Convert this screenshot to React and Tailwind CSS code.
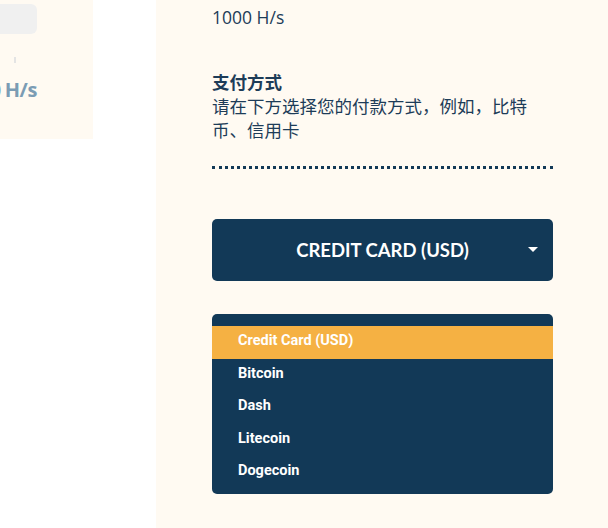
import React from "react";

export default function App() {
  const items = ["Credit Card (USD)", "Bitcoin", "Dash", "Litecoin", "Dogecoin"];
  return (
    <div className="flex w-[608px] h-[528px] bg-white overflow-hidden">
      <div className="w-[93px] h-[139px] shrink-0 bg-[#fffaf2] overflow-hidden flex flex-col items-end pr-[56px]">
        <div className="mt-[4px] w-[60px] h-[30px] shrink-0 rounded-[6px] bg-[#f0f0f0]" />
        <div className="mt-[23px] mr-[21px] w-[2px] h-[6px] shrink-0 bg-[#e4e4e4]" />
        <div className="mt-[13px] whitespace-nowrap font-['Open_Sans',sans-serif] font-bold text-[20px] leading-[28px] tracking-[-0.4px] [word-spacing:-1px] text-[#7b9cb4]">
          1000 H/s
        </div>
      </div>
      <div className="w-[63px] shrink-0" />
      <div className="flex-1 bg-[#fffaf2] pl-[56px] pr-[55px] pt-[5px] flex flex-col">
        <div className="font-['Open_Sans',sans-serif] text-[17.5px] leading-[24px] text-[#1d3c58]">1000 H/s</div>
        <div className="mt-[41px] font-['Noto_Sans','Noto_Sans_CJK_SC',sans-serif] text-[#1d3c58]">
          <div className="font-bold text-[17.5px] leading-[24px]">支付方式</div>
          <div className="text-[17.5px] leading-[24px]">请在下方选择您的付款方式，例如，比特币、信用卡</div>
        </div>
        <div className="mt-[24px] border-t-[3px] border-dotted border-[#123957]" />
        <div className="mt-[50px] relative h-[62px] rounded-[5px] bg-[#123957] flex items-center justify-center pt-[2px]">
          <span className="font-['Lato',sans-serif] font-bold text-[18.5px] text-white">CREDIT CARD (USD)</span>
          <span className="absolute right-[15px] top-[28px] w-0 h-0 border-l-[5px] border-r-[5px] border-t-[5px] border-l-transparent border-r-transparent border-t-white" />
        </div>
        <div className="mt-[33px] rounded-[5px] bg-[#123957] pt-[12px] pb-[5.5px] flex flex-col">
          {items.map((it, i) => (
            <div
              key={it}
              className={`h-[32.5px] pb-[2px] flex items-center pl-[26px] font-['Roboto',sans-serif] font-bold text-[14.5px] text-white ${i === 0 ? "bg-[#f5b143]" : ""}`}
            >
              {it}
            </div>
          ))}
        </div>
      </div>
    </div>
  );
}
